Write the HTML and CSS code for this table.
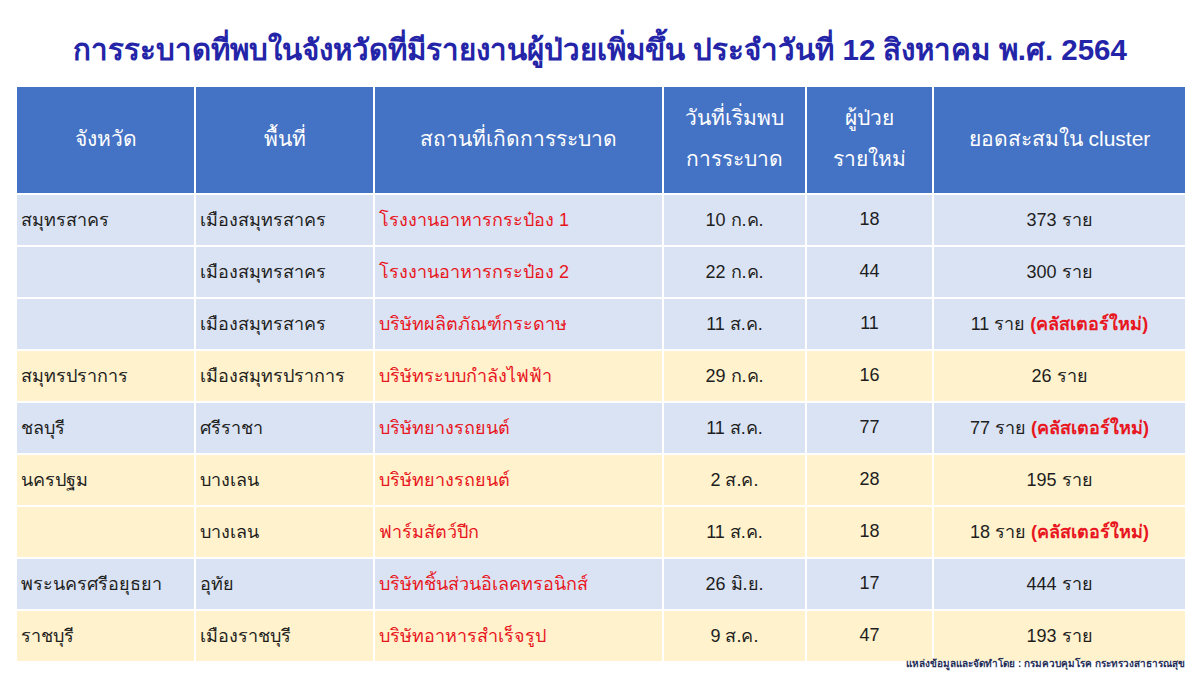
FILE: index.html
```html
<!DOCTYPE html>
<html lang="th">
<head>
<meta charset="utf-8">
<title>การระบาดที่พบในจังหวัด</title>
<link rel="stylesheet" href="styles.css">
</head>
<body>
<div class="page">
  <h1 class="title">การระบาดที่พบในจังหวัดที่มีรายงานผู้ป่วยเพิ่มขึ้น ประจำวันที่ 12 สิงหาคม พ.ศ. 2564</h1>
  <table class="grid">
    <colgroup>
      <col class="c1"><col class="c2"><col class="c3"><col class="c4"><col class="c5"><col class="c6">
    </colgroup>
    <thead>
      <tr>
        <th>จังหวัด</th>
        <th>พื้นที่</th>
        <th>สถานที่เกิดการระบาด</th>
        <th>วันที่เริ่มพบ<br>การระบาด</th>
        <th>ผู้ป่วย<br>รายใหม่</th>
        <th>ยอดสะสมใน cluster</th>
      </tr>
    </thead>
    <tbody>
      <tr class="blue"><td class="l">สมุทรสาคร</td><td class="l">เมืองสมุทรสาคร</td><td class="l red">โรงงานอาหารกระป๋อง 1</td><td>10 ก.ค.</td><td>18</td><td>373 ราย</td></tr>
      <tr class="blue"><td class="l"></td><td class="l">เมืองสมุทรสาคร</td><td class="l red">โรงงานอาหารกระป๋อง 2</td><td>22 ก.ค.</td><td>44</td><td>300 ราย</td></tr>
      <tr class="blue"><td class="l"></td><td class="l">เมืองสมุทรสาคร</td><td class="l red">บริษัทผลิตภัณฑ์กระดาษ</td><td>11 ส.ค.</td><td>11</td><td>11 ราย <span class="red b">(คลัสเตอร์ใหม่)</span></td></tr>
      <tr class="yellow"><td class="l">สมุทรปราการ</td><td class="l">เมืองสมุทรปราการ</td><td class="l red">บริษัทระบบกำลังไฟฟ้า</td><td>29 ก.ค.</td><td>16</td><td>26 ราย</td></tr>
      <tr class="blue"><td class="l">ชลบุรี</td><td class="l">ศรีราชา</td><td class="l red">บริษัทยางรถยนต์</td><td>11 ส.ค.</td><td>77</td><td>77 ราย <span class="red b">(คลัสเตอร์ใหม่)</span></td></tr>
      <tr class="yellow"><td class="l">นครปฐม</td><td class="l">บางเลน</td><td class="l red">บริษัทยางรถยนต์</td><td>2 ส.ค.</td><td>28</td><td>195 ราย</td></tr>
      <tr class="yellow"><td class="l"></td><td class="l">บางเลน</td><td class="l red">ฟาร์มสัตว์ปีก</td><td>11 ส.ค.</td><td>18</td><td>18 ราย <span class="red b">(คลัสเตอร์ใหม่)</span></td></tr>
      <tr class="blue"><td class="l">พระนครศรีอยุธยา</td><td class="l">อุทัย</td><td class="l red">บริษัทชิ้นส่วนอิเลคทรอนิกส์</td><td>26 มิ.ย.</td><td>17</td><td>444 ราย</td></tr>
      <tr class="yellow"><td class="l">ราชบุรี</td><td class="l">เมืองราชบุรี</td><td class="l red">บริษัทอาหารสำเร็จรูป</td><td>9 ส.ค.</td><td>47</td><td>193 ราย</td></tr>
    </tbody>
  </table>
  <p class="source">แหล่งข้อมูลและจัดทำโดย : กรมควบคุมโรค กระทรวงสาธารณสุข</p>
</div>
</body>
</html>
```

FILE: styles.css
```css
html, body {
  margin: 0;
  padding: 0;
  background: #ffffff;
}
body {
  font-family: Tahoma, "Liberation Sans", "Noto Sans", sans-serif;
  color: #1e1e1e;
}
.page {
  width: 1200px;
  height: 675px;
  overflow: hidden;
  padding: 0 15px;
  box-sizing: border-box;
}
.title {
  margin: 0;
  padding-top: 31px;
  height: 85px;
  box-sizing: border-box;
  text-align: center;
  font-size: 29.5px;
  line-height: 38px;
  font-weight: bold;
  color: #2424a8;
  white-space: nowrap;
}
.grid {
  width: 1170px;
  border-collapse: collapse;
  table-layout: fixed;
}
.c1 { width: 179px; }
.c2 { width: 179px; }
.c3 { width: 289px; }
.c4 { width: 143px; }
.c5 { width: 127px; }
.c6 { width: 253px; }
.grid th,
.grid td {
  border: 2px solid #ffffff;
  padding: 0 4px;
  text-align: center;
  vertical-align: middle;
}
.grid th {
  background: #4472c4;
  color: #ffffff;
  font-weight: normal;
  font-size: 21px;
  line-height: 41px;
  height: 102px;
  padding-bottom: 4px;
}
.grid td {
  height: 48px;
  font-size: 18px;
  padding-bottom: 2px;
}
.grid td.l {
  text-align: left;
}
.blue td { background: #dae3f3; }
.yellow td { background: #fff2cc; }
.red { color: #e8161e; }
.b { font-weight: bold; }
.source {
  margin: 0;
  text-align: right;
  font-size: 10px;
  line-height: 11px;
  color: #283058;
  margin-top: -5px;
  font-weight: bold;
}
```
